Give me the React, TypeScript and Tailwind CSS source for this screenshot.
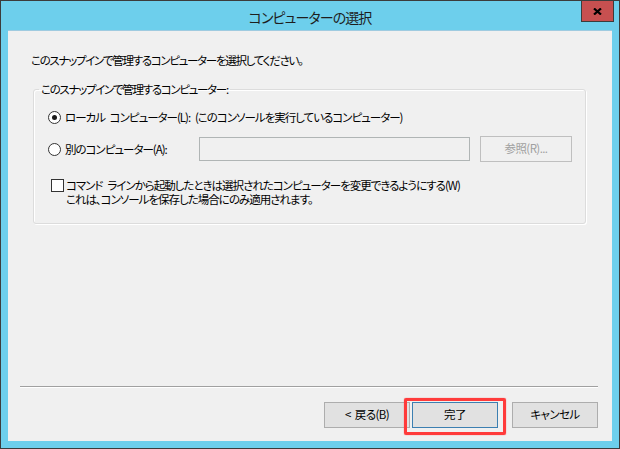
import React from 'react'

const font = "[font-family:'Noto_Sans_CJK_JP','Noto_Sans',sans-serif] [font-feature-settings:'palt']"

function Radio({ checked }: { checked?: boolean }) {
    return (
        <span className="flex h-[13px] w-[13px] shrink-0 items-center justify-center rounded-full border border-[#333333] bg-white">
            {checked && <span className="h-[5px] w-[5px] rounded-full bg-[#1a1a1a]" />}
        </span>
    )
}

function Button({ label, primary, disabled, w }: { label: string; primary?: boolean; disabled?: boolean; w: string }) {
    return (
        <div
            className={`flex h-[26px] items-center justify-center border text-[11.5px] leading-none tracking-[-0.6px] ${w} ${
                disabled
                    ? 'border-[#bfbfbf] bg-[#f0f0f0] text-[#a0a0a0]'
                    : primary
                      ? 'border-[#3c7fb1] bg-[#e1e1e1] text-black'
                      : 'border-[#adadad] bg-[#e1e1e1] text-black'
            }`}
        >
            {label}
        </div>
    )
}

export default function App() {
    return (
        <div className={`flex h-[449px] w-[620px] flex-col border border-[#3c3c3c] bg-[#6dcfec] ${font}`}>
            {/* Title bar */}
            <div className="relative flex h-[29px] shrink-0 items-center justify-center pt-[4px]">
                <span className="text-[14px] tracking-[-0.9px] text-[#1e1e1e]">コンピューターの選択</span>
                <div className="absolute right-[5px] top-[-1px] flex h-[22px] w-[33px] items-center justify-center border border-[#3c3c3c] bg-[#c75050]">
                    <svg width="9" height="7" viewBox="0 0 9 7">
                        <path d="M1 0.5 L8 6.5 M8 0.5 L1 6.5" stroke="#000" strokeWidth="2.2" />
                    </svg>
                </div>
            </div>

            {/* Client area */}
            <div className="mx-[7px] mb-[7px] flex flex-1 flex-col border-t border-[#9fcbe0] bg-[#f0f0f0] text-[11.5px] tracking-[-1px] text-black">
                <p className="ml-[23px] mt-[21px] leading-[16px] tracking-[-1.3px]">
                    このスナップインで管理するコンピューターを選択してください。
                </p>

                <fieldset className="ml-[25px] mt-[13px] h-[143px] w-[553px] rounded-[3px] border border-[#dcdcdc] shadow-[inset_1px_1px_0_#ffffff,1px_1px_0_#ffffff]">
                    <legend className="ml-[5px] px-[2px] leading-[16px] tracking-[-1.3px]">このスナップインで管理するコンピューター:</legend>

                    <div className="ml-[14px] mt-[12px] flex items-center gap-[4px] leading-[16px]">
                        <Radio checked />
                        <span>ローカル{'\u2002'}コンピューター(L):{'\u2002'}(このコンソールを実行しているコンピューター)</span>
                    </div>

                    <div className="ml-[14px] mt-[12px] flex h-[24px] items-center">
                        <div className="flex w-[151px] items-center gap-[4px] leading-[16px]">
                            <Radio />
                            <span>別のコンピューター(A):</span>
                        </div>
                        <div className="h-[24px] w-[271px] border border-[#b0b5b5] bg-[#f0f0f0]" />
                        <div className="ml-[10px]">
                            <Button label="参照(R)..." disabled w="w-[92px] h-[25px]" />
                        </div>
                    </div>

                    <div className="ml-[17px] mt-[17px] flex items-start gap-[2px]">
                        <span className="mt-[1px] h-[13px] w-[13px] shrink-0 border border-[#333333] bg-white" />
                        <div className="leading-[14px]">
                            <div>コマンド{'\u2002'}ラインから起動したときは選択されたコンピューターを変更できるようにする(W)</div>
                            <div>これは、コンソールを保存した場合にのみ適用されます。</div>
                        </div>
                    </div>
                </fieldset>

                <div className="flex-1" />

                {/* Separator */}
                <div className="ml-[12px] mr-[14px] border-t border-b border-t-[#a0a0a0] border-b-white" />

                {/* Buttons */}
                <div className="mb-[13px] mr-[14px] mt-[14px] flex justify-end gap-[2px]">
                    <Button label="<  戻る(B)" w="w-[86px] whitespace-pre" />
                    <div className="relative">
                        <Button label="完了" primary w="w-[86px]" />
                        <div className="pointer-events-none absolute -inset-x-[8px] -bottom-[7px] -top-[4px] rounded-[2px] border-[3px] border-[#ff3b3b] shadow-[0_0_1px_#ff3b3b]" />
                    </div>
                    <div className="ml-[12px]">
                        <Button label="キャンセル" w="w-[86px]" />
                    </div>
                </div>
            </div>
        </div>
    )
}
